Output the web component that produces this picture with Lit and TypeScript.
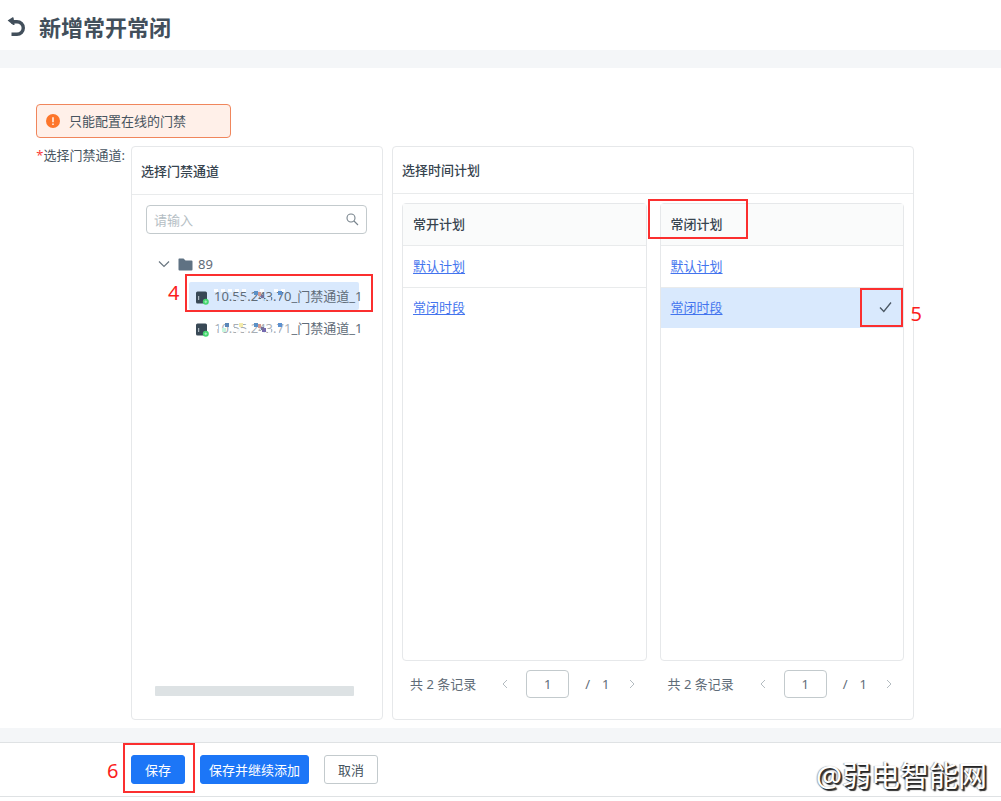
import { LitElement, html, css, svg } from "lit";
import { customElement, property, state } from "lit/decorators.js";
import { classMap } from "lit/directives/class-map.js";

const base = css`
  *, *::before, *::after { box-sizing: border-box; }
  button, input {
    font: inherit;
    color: inherit;
    margin: 0;
  }
  button { cursor: pointer; }
  svg { display: block; flex: none; }
  .mark {
    position: absolute;
    border: 2px solid #fb2f2f;
    pointer-events: none;
  }
  .step {
    position: absolute;
    color: #fb1e1e;
    font-size: 20px;
    line-height: 20px;
    font-weight: 400;
    pointer-events: none;
  }
`;

@customElement("plan-table")
export class PlanTable extends LitElement {
  @property() heading = "";
  @property({ type: Array }) plans: string[] = [];
  @property({ type: Number }) selected = -1;
  @property({ type: Boolean }) marked = false;

  static styles = [base, css`
    :host { display: flex; flex-direction: column; min-width: 0; }
    .box {
      flex: 1;
      border: 1px solid #e6e8ea;
      border-radius: 4px;
    }
    .grid { width: 100%; border-collapse: separate; border-spacing: 0; }
    .head, .cell {
      position: relative;
      height: 40px;
      padding: 0 10px 2px;
      text-align: left;
      line-height: 20px;
    }
    .head {
      height: 42px;
      font-weight: 500;
      color: #37444f;
      background: #fafbfb;
      border-bottom: 1px solid #e9ebec;
    }
    .ruled .cell { height: 42px; border-bottom: 1px solid #e9ebec; }
    .chosen .cell { background: #d9e9fd; }
    .tick { width: 42px; padding: 0 11px 2px 0; }
    .tick svg { margin-left: auto; }
    .link { color: #4374ee; text-decoration: underline; text-underline-offset: 2px; }
    .pager {
      display: flex;
      align-items: center;
      height: 28px;
      margin: 9px 0 21px;
      padding: 0 5px 0 8px;
      color: #5f6c78;
      white-space: nowrap;
    }
    .total { flex: 1; }
    .turn {
      display: grid;
      place-items: center;
      width: 20px;
      height: 28px;
      padding: 0;
      border: 0;
      background: none;
    }
    .page {
      width: 43px;
      height: 28px;
      margin: 0 16px 0 11px;
      padding: 0;
      text-align: center;
      border: 1px solid #c3cacd;
      border-radius: 4px;
      background: #fff;
      outline: 0;
    }
    .count { margin: 0 12px; }
    .on-head { left: -13px; top: -5px; width: 100px; height: 40px; }
    .on-tick { right: 0; top: 0; width: 43px; height: 39px; }
    .five { right: -19px; top: 16px; }
  `];

  private chevron(d: string) {
    return svg`<svg width="8" height="10" viewBox="0 0 8 10" fill="none" stroke="#b4bcc1" stroke-width="1"><path d=${d} /></svg>`;
  }

  render() {
    return html`
      <div class="box">
        <table class="grid">
          <thead>
            <tr><th class="head" colspan="2" scope="col">${this.heading}
              ${this.marked ? html`<span class="mark on-head"></span>` : null}</th></tr>
          </thead>
          <tbody>
            ${this.plans.map((plan, i) => {
              const chosen = i === this.selected;
              return html`<tr class=${classMap({ chosen, ruled: i < this.plans.length - 1 })}>
                <td class="cell"><a class="link" href="#">${plan}</a></td>
                <td class="cell tick">${chosen ? html`
                  <svg width="13" height="12" viewBox="0 0 13 12" fill="none" stroke="#4a5763" stroke-width="1.3"><path d="M1 6.5 L4.8 10.5 L12 1.5" /></svg>
                  <span class="mark on-tick"></span><span class="step five">5</span>` : null}</td>
              </tr>`;
            })}
          </tbody>
        </table>
      </div>
      <div class="pager">
        <span class="total">共 ${this.plans.length} 条记录</span>
        <button class="turn" aria-label="上一页">${this.chevron("M6 1 L2 5 L6 9")}</button>
        <input class="page" aria-label="页码" value="1">
        <span>/</span><span class="count">1</span>
        <button class="turn" aria-label="下一页">${this.chevron("M2 1 L6 5 L2 9")}</button>
      </div>`;
  }
}

@customElement("app-root")
export class AppRoot extends LitElement {
  @state() private plans = ["默认计划", "常闭时段"];

  static styles = [base, css`
    :host {
      display: flex;
      flex-direction: column;
      min-height: 100vh;
      padding-bottom: 4px;
      box-sizing: border-box;
      background: #fff;
      color: #47545f;
      font: 13px/20px "Noto Sans", "Noto Sans CJK SC", sans-serif;
    }
    .top { display: flex; align-items: center; gap: 13px; height: 50px; padding: 3px 7px 0; }
    .back { padding: 0; border: 0; background: none; }
    .title { margin: 0; font-size: 22px; line-height: 32px; font-weight: 700; color: #424f5b; }
    .band { height: 18px; background: #f4f6f8; }
    .band.low { height: 14px; }
    .main { flex: 1; display: flex; flex-direction: column; padding: 36px 87px 8px 36px; }
    .alert {
      display: flex;
      align-items: center;
      gap: 9px;
      align-self: flex-start;
      min-width: 195px;
      height: 34px;
      padding: 0 9px;
      border: 1px solid #f0865c;
      border-radius: 4px;
      background: #fff0e9;
    }
    .form { flex: 1; display: flex; margin-top: 8px; }
    .label { flex: none; width: 95px; padding-right: 6px; line-height: 18px; text-align: right; white-space: nowrap; }
    .star { color: #fb3b3b; }
    .panel { display: flex; flex-direction: column; min-width: 0; border: 1px solid #e6e8ea; border-radius: 4px; }
    .doors { flex: 251; flex-basis: 0; margin-right: 9px; }
    .times { flex: 522; flex-basis: 0; }
    .heading {
      margin: 0;
      padding: 14px 9px 13px;
      font-size: 13px;
      line-height: 20px;
      font-weight: 500;
      color: #37444f;
      border-bottom: 1px solid #e9ebec;
    }
    .times .heading { padding-top: 13px; }
    .search { display: flex; align-items: center; height: 29px; margin: 10px 15px 0 14px; padding: 0 7px; border: 1px solid #c3cacd; border-radius: 4px; }
    .query { flex: 1; min-width: 0; padding: 0; border: 0; outline: 0; background: none; }
    .query::placeholder { color: #b5bec4; opacity: 1; }
    .tree { flex: 1; margin: 14px 23px 0 26px; padding: 0; list-style: none; white-space: nowrap; }
    .group { display: flex; align-items: center; gap: 5px; height: 32px; color: #5f6c78; }
    .arrow { margin-right: 3px; }
    .leaves { margin: 2px 0 0 31px; padding: 0; list-style: none; }
    .leaf { position: relative; display: flex; align-items: center; gap: 5px; height: 28px; margin-bottom: 4px; padding-left: 7px; border-radius: 2px; color: #5f6c78; }
    .leaf.active { background: #d9e9fd; }
    .device { margin-top: 3px; }
    .name { position: relative; }
    .mosaic { position: absolute; left: 0; top: 0; }
    .bar { height: 10px; margin: 0 28px 23px 23px; border-radius: 1px; background: #dde2e4; }
    .tables { flex: 1; display: grid; grid-template-columns: 1fr 1fr; gap: 13px; padding: 9px 9px 0; }
    .foot { position: relative; display: flex; align-items: center; gap: 15px; height: 55px; padding: 0 131px; border: 1px solid #dfe2e4; border-width: 1px 0; }
    .btn { position: relative; height: 29px; padding: 0 13px; border: 1px solid #c3cacd; border-radius: 3px; background: #fff; white-space: nowrap; }
    .btn.primary { padding: 0 8px; border-color: #1c76f7; background: #1c76f7; color: #fff; }
    .btn.first { padding: 0 13px; }
    .on-leaf { left: -4px; right: -14px; top: -8px; height: 38px; }
    .four { left: -21px; top: 1px; }
    .on-save { left: -9px; top: -13px; width: 72px; height: 50px; }
    .six { left: -25px; top: 5px; }
    .sign { position: absolute; right: 14px; bottom: 3px; font-size: 29px; line-height: 34px; color: #fff; text-shadow: 1px 1px 1px #222, 2px 2px 1px #333, -1px 0 1px #aaa; }
  `];

  private device() {
    return svg`<svg class="device" width="13" height="14" viewBox="0 0 13 14"><rect x="0" y="0.5" width="11" height="12" rx="1.5" fill="#394956"/><rect x="2" y="5" width="1.2" height="4" fill="#a9b5be"/><circle cx="9.8" cy="10.8" r="3" fill="#42d66c"/><path d="M8.4 10.8 H11.2 M9.8 9.4 V12.2" stroke="#bdf3cc" stroke-width="0.8"/></svg>`;
  }

  /* Pixel blocks that obscure part of the device address */
  private mosaic(active: boolean) {
    const veil = active ? "#d9e9fd" : "#fff";
    return svg`<svg class="mosaic" width="82" height="20" viewBox="0 0 82 20">
      ${[0, 7, 14, 21, 28, 46, 60, 67].map((x) => svg`<rect x=${x} y="3" width="4" height="3" fill="#fff" opacity="0.9"/>`)}
      ${[22, 30, 47, 54, 62].map((x) => svg`<rect x=${x} y="11" width="3" height="5" fill=${veil} opacity="0.85"/>`)}
      ${active ? null : svg`
        <rect x="0" y="6" width="80" height="9" fill="#fff" opacity="0.45"/>
        <rect x="1" y="8" width="3" height="3" fill="#fff"/><rect x="16" y="9" width="4" height="3" fill="#fff"/>
        <rect x="11" y="5" width="4" height="4" fill="#5a86b8"/><rect x="8" y="10" width="4" height="4" fill="#c5f4df"/>
        <rect x="25" y="5" width="4" height="4" fill="#f4ebab"/><rect x="48" y="10" width="4" height="4" fill="#7568ae"/>`}
      <rect x="40" y="5" width="4" height="4" fill="#5b91c7"/>
      <rect x="44" y="6" width="3" height="4" fill="#d39a91"/>
      <rect x="47" y="9" width="3" height="3" fill="#756f98"/>
      <rect x="64" y="5" width="4" height="4" fill="#5b91d0"/>
    </svg>`;
  }

  render() {
    return html`
      <header class="top">
        <button class="back" aria-label="返回">
          <svg width="19" height="20" viewBox="0 0 19 20" fill="none" stroke="#424f5b" stroke-width="3.4"><path d="M4 4.7 H10 A6.3 6.3 0 0 1 10 17.3 H4.5"/><path d="M0.6 3.6 L5.6 0.2 Q6.6 0 6.6 1 L7.6 7.4 Q7.2 8.4 6.2 7.9 Z" fill="#424f5b" stroke="none"/></svg>
        </button>
        <h1 class="title">新增常开常闭</h1>
      </header>
      <div class="band"></div>
      <main class="main">
        <div class="alert" role="alert">
          <svg width="14" height="14" viewBox="0 0 14 14"><circle cx="7" cy="7" r="7" fill="#fd762b"/><path d="M7 3.2 V8.2 M7 9.6 V11" stroke="#fff" stroke-width="1.4"/></svg>
          <span>只能配置在线的门禁</span>
        </div>
        <div class="form">
          <label class="label" for="query"><span class="star">*</span>选择门禁通道:</label>
          <section class="panel doors">
            <h2 class="heading">选择门禁通道</h2>
            <div class="search">
              <input id="query" class="query" placeholder="请输入">
              <svg width="13" height="13" viewBox="0 0 13 13" fill="none" stroke="#77838c" stroke-width="1.1"><circle cx="5" cy="5" r="4"/><path d="M8 8 L12 12"/></svg>
            </div>
            <ul class="tree">
              <li>
                <div class="group">
                  <svg class="arrow" width="12" height="8" viewBox="0 0 12 8" fill="none" stroke="#6a7680" stroke-width="1.2"><path d="M1 1.5 L6 6.5 L11 1.5"/></svg>
                  <svg width="15" height="13" viewBox="0 0 15 13" fill="#5f7283"><path d="M1 0.5 H5.5 L7.5 2.5 H13.5 Q14.5 2.5 14.5 3.5 V11.5 Q14.5 12.5 13.5 12.5 H1.5 Q0.5 12.5 0.5 11.5 V1 Z"/></svg>
                  <span>89</span>
                </div>
                <ul class="leaves">
                  ${["10.55.243.70_门禁通道_1", "10.55.243.71_门禁通道_1"].map((name, i) => html`
                    <li class=${classMap({ leaf: true, active: i === 0 })}>
                      ${this.device()}<span class="name">${name}${this.mosaic(i === 0)}</span>
                      ${i === 0 ? html`<span class="mark on-leaf"></span><span class="step four">4</span>` : null}
                    </li>`)}
                </ul>
              </li>
            </ul>
            <div class="bar"></div>
          </section>
          <section class="panel times">
            <h2 class="heading">选择时间计划</h2>
            <div class="tables">
              <plan-table heading="常开计划" .plans=${this.plans}></plan-table>
              <plan-table heading="常闭计划" .plans=${this.plans} .selected=${1} marked></plan-table>
            </div>
          </section>
        </div>
      </main>
      <div class="band low"></div>
      <footer class="foot">
        <button class="btn primary first">保存<span class="mark on-save"></span><span class="step six">6</span></button>
        <button class="btn primary">保存并继续添加</button>
        <button class="btn">取消</button>
        <span class="sign">@弱电智能网</span>
      </footer>`;
  }
}
